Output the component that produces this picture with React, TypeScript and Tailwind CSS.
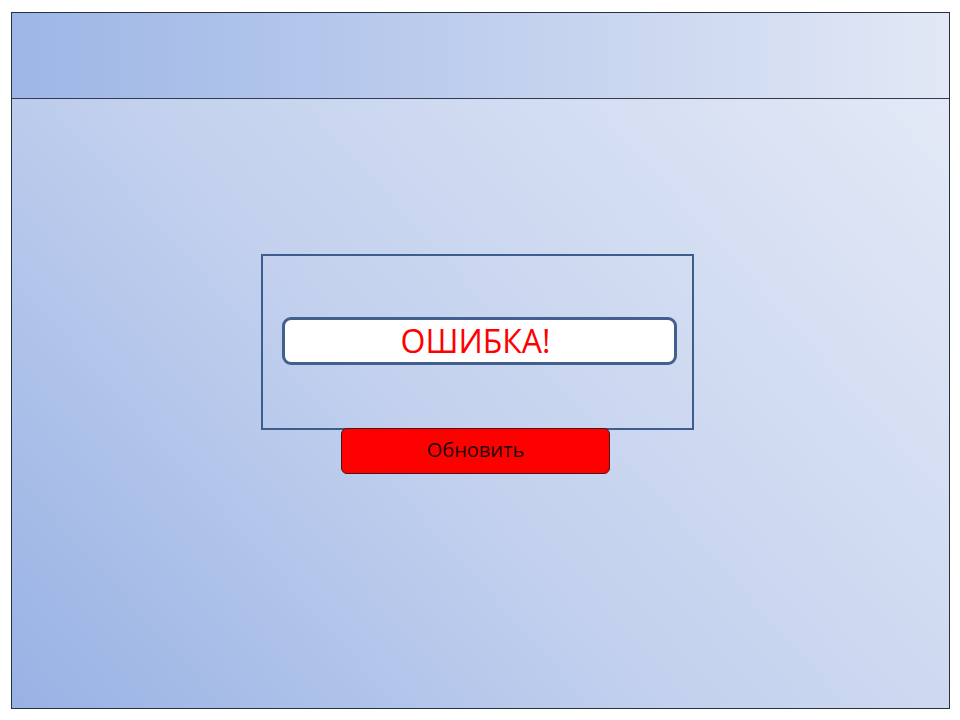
export default function App() {
  return (
    <div className="w-[960px] h-[720px] bg-white pt-[12px] pl-[11px] font-['Open_Sans',sans-serif]">
      {/* Window frame */}
      <div className="w-[939px] h-[697px] border border-[#27313f] flex flex-col">
        {/* Header bar */}
        <div className="h-[86px] border-b border-[#323c4c] bg-[linear-gradient(90deg,#9db6e6,#e2e8f5)]" />

        {/* Body */}
        <div className="flex-1 bg-[linear-gradient(48deg,#98b2e4_0%,#c3d1ee_45%,#e3e9f6_100%)] pt-[155px] pl-[249px]">
          <div className="w-[433px] h-[176px] border-2 border-[#3d5d8c] pt-[61px] pl-[19px]">
            <div className="w-[395px] h-[48px] rounded-[9px] border-[3px] border-[#41608e] bg-white flex items-center justify-center pr-[8px]">
              <span className="text-[32px] leading-none text-[#ff0000] font-['Open_Sans',sans-serif]">ОШИБКА!</span>
            </div>
          </div>
          <button className="ml-[80px] -mt-[2px] w-[269px] h-[46px] rounded-[6px] border border-[#4a1515] bg-[#ff0000] flex items-center justify-center pb-[2px] text-[20px] leading-none text-[#1a0808]">
            Обновить
          </button>
        </div>
      </div>
    </div>
  );
}
